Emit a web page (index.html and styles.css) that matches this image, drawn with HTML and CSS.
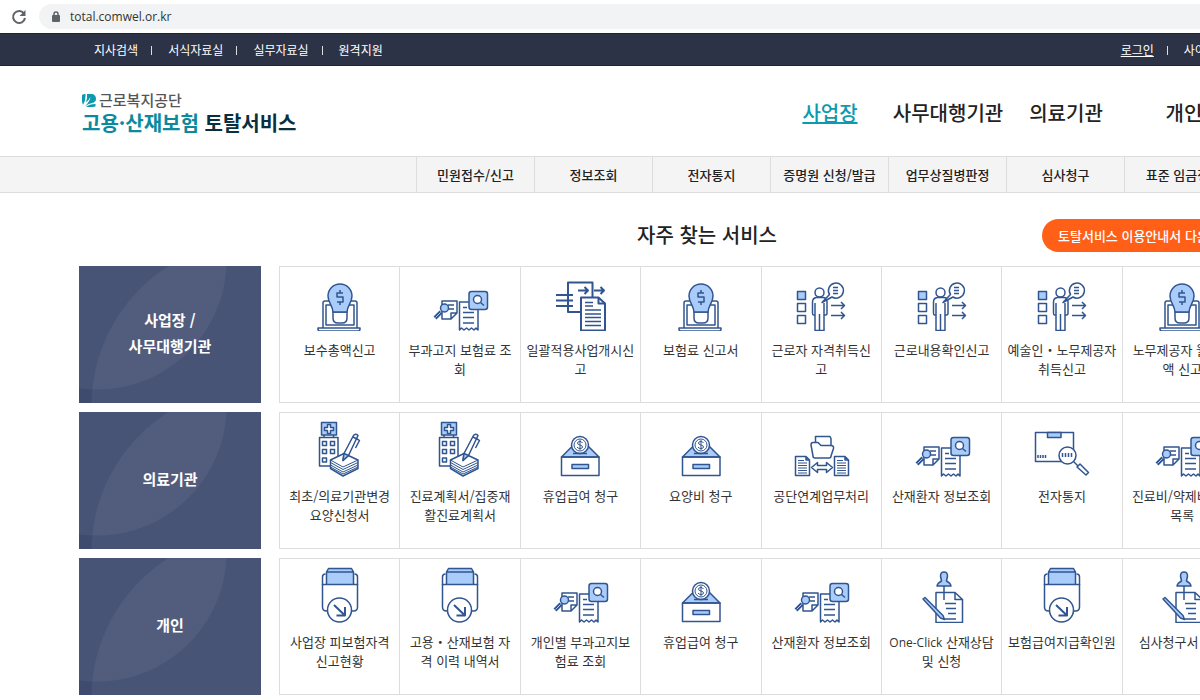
FILE: index.html
```
<!DOCTYPE html>
<html lang="ko">
<head>
    <meta charset="UTF-8">
    <meta name="viewport" content="width=device-width, initial-scale=1.0">
    <title>고용·산재보험 토탈서비스</title>
    <link rel="stylesheet" href="styles.css">
</head>
<body>
    <!-- service icons -->
    <svg class="sprite" aria-hidden="true">
        <symbol id="ico-bulb" viewBox="0 0 60 60">
            <path d="M13 57V32q0-2 2-2h30q2 0 2 2v25"/>
            <path d="M16 54V34h28v20z"/>
            <path d="M8 57h42v1q0 2-2 2H10q-2 0-2-2z"/>
            <path class="white" d="M23 41h14v6q0 5-5 5h-4q-5 0-5-5z"/>
            <path class="fill" d="M23 41c0-6-5-9-5-16a12 12 0 0 1 24 0c0 7-5 10-5 16z"/>
            <path d="M33 22h-6v4h6v5h-6M30 19v3M30 31v3"/>
        </symbol>
        <symbol id="ico-search" viewBox="0 0 60 60">
            <path d="M12 30h15v12l-6 6h-9zM27 42h-6v6M18 34h6M19 38h5"/>
            <path class="thick" d="M11 41l-6 6"/>
            <path class="core" d="M10.500 41.500l-5 5"/>
            <circle class="fill" cx="14.500" cy="37" r="4"/>
            <path class="white" d="M29.500 31H48v28l-2-2-2 2-2.500-2-2.500 2-2.500-2-2.500 2-2.500-2-2 2z"/>
            <path d="M33 36.500h4M33 41.500h11M33 46.500h11M33 52h11"/>
            <rect class="fill" x="39" y="20.500" width="18.500" height="18" rx="2.500"/>
            <circle class="white" cx="47.500" cy="28.500" r="4"/>
            <path d="M50.500 31.500l3.500 3"/>
        </symbol>
        <symbol id="ico-transfer" viewBox="0 0 60 60">
            <path class="bold" d="M18 11.500h24.500V41H18zM6 24h17M6 29.500h17M6 35h17"/>
            <path class="bold" d="M28 19.500h10M34.500 16l3.500 3.500-3.500 3.500M44 19.500h10M50.500 16l3.500 3.500-3.500 3.500"/>
            <path class="white bold" d="M31 26.500h17.500l6.500 6V59.500H31z"/>
            <path class="bold" d="M48.500 27v5.500H55"/>
            <path d="M35 31.500h8M35 35h8M35 39h16M35 43h16M35 46.500h16M35 50.500h16M35 54.500h16"/>
        </symbol>
        <symbol id="ico-person" viewBox="0 0 60 60">
            <path class="fill" d="M6.500 20.500h8v8h-8z"/>
            <path d="M6.500 32.500h8v8h-8zM6.500 44.500h8v8h-8z"/>
            <circle cx="28.500" cy="21.500" r="4.500"/>
            <path d="M24 59.500V44h-1.500q-1 0-1-2V31q0-4 4-4.500h7q3.500.500 3.500 4.500v11q0 2-1.500 2H33v15.500zM24 44V32M33 44V32M28.500 59V43"/>
            <path class="white" d="M38.500 23.500L31 31.500l10-5.500a7.500 7.500 0 1 0-2.500-2.500z"/>
            <path d="M42 16.500h5M42 19.500h5M42 22.500h5"/>
            <path d="M40 34.500h13.500M50 31l3.500 3.500L50 38M40 44.500h13.500M50 41l3.500 3.500L50 48"/>
        </symbol>
        <symbol id="ico-hospital" viewBox="0 0 60 60">
            <path d="M14 18v2M23.500 18v2M9.500 20.500H28V49H9.500z"/>
            <path class="fill" d="M11.500 5.500h15V18h-15z"/>
            <path class="white" d="M17.500 7.500h3v3h3v3h-3v3h-3v-3h-3v-3h3z"/>
            <path d="M12.500 24.500h4v4h-4zM20.500 24.500h4v4h-4zM12.500 32.500h4v4h-4zM20.500 32.500h4v4h-4zM12.500 41h4v4h-4z"/>
            <path class="white" d="M20.500 43L34 36.500 48 43v8.500l-15 7.500-12.500-7.500z"/>
            <path class="thin" d="M20.500 43L33 50 48 43M20.500 45.500L33 52.500 48 45.500M20.500 48L33 55 48 48M20.500 50L33 57 48 50"/>
            <path class="white" d="M33 43.500l1-7 9.500-18q2-2.500 4.500 0L38.500 38.500z"/>
            <path class="fill" d="M33 43.500l1-7 4.500 2z"/>
            <path d="M43 20l5 2.500 1.500 1-4 7.500"/>
        </symbol>
        <symbol id="ico-coin" viewBox="0 0 60 60">
            <path class="fill" d="M22 29.500h16.500L49 40H11.500z"/>
            <path d="M11.500 40H49v18.500H11.500z"/>
            <path class="fill" d="M22 47.500h16.500v4H22z"/>
            <circle class="white" cx="30" cy="28" r="8.500"/>
            <circle class="thin" cx="30" cy="28" r="6"/>
            <path class="thin" d="M32.500 26q-1-1.500-2.500-1.500-2.500 0-2.500 1.500t2.500 2 2.500 2-2.500 1.500q-2 0-3-1.500M30 23v10"/>
            <path d="M23 36.500h14"/>
        </symbol>
        <symbol id="ico-exchange" viewBox="0 0 60 60">
            <path d="M24.500 27v-7.500H39l1 2V28"/>
            <path class="white" d="M22 39l-2-11q0-2.500 2-2.500h5l3 3h10q3 0 2.500 3L40 39q0 2-2 2H24q-2 0-2-2z"/>
            <path d="M4.500 39.500H15l3.500 3.500v15.500h-14zM15 39.500V43h3.500M43.500 39.500H54l3.500 3.500v15.500h-14zM54 39.500V43h3.500"/>
            <path class="thin" d="M7 43.500h6M7 46h9M7 48.500h9M7 51h9M7 53.500h9M7 56h9M46 43.500h6M46 46h9M46 48.500h9M46 51h9M46 53.500h9M46 56h9"/>
            <path d="M20.500 50.500l6-5v3h9v-3l6 5-6 5v-3h-9v3z"/>
        </symbol>
        <symbol id="ico-package" viewBox="0 0 60 60">
            <path d="M3.500 15.500h38v29h-38z"/>
            <path class="fill" d="M15.500 15.500H29v5H15.500z"/>
            <path d="M6 38v3M8.500 38v3M11 38v3M13.500 38v3"/>
            <path d="M42 45l4 4"/>
            <path class="white" d="M45 50l3-3 8.500 8.500-2.500 2.500z"/>
            <circle class="white" cx="35.500" cy="38.500" r="8.500"/>
            <path d="M30.500 36v4M33.500 36v4M36.500 36v4M39.500 36v4"/>
        </symbol>
        <symbol id="ico-folder" viewBox="0 0 60 60">
            <path d="M12.500 22V14q0-3 3-3M47.500 22V14q0-3-3-3"/>
            <path class="fill" d="M16.500 21V9l2-3.500h23l2 3.500v12M16.500 9h27"/>
            <path class="white" d="M12.500 21.500h35V44q0 4-4 4h-27q-4 0-4-4z"/>
            <circle class="white" cx="29.500" cy="47" r="12"/>
            <path class="bold" d="M24 42l10.500 10M35 44v8.500h-8.500"/>
        </symbol>
        <symbol id="ico-pin" viewBox="0 0 60 60">
            <path d="M24 29.500h19l7.500 7v23H24zM43 29.500v7h7.500"/>
            <path d="M32 23v14M33 40.500h11M34 45.500h10M36 50.500h8M33 56h11"/>
            <path class="fill" d="M28.500 13q0-4 3.500-4t3.500 4l-1 5q4 2 4.500 5H25q.5-3 4.500-5z"/>
            <path class="fill" d="M11 36l2-1.500 18 18 1.500 4-4-1.500z"/>
        </symbol>
    </svg>

    <div class="browser-bar">
        <button class="reload" aria-label="새로고침">
            <svg width="16" height="16" viewBox="0 0 16 16"><path d="M13 4.500A6 6 0 1 0 14 9" fill="none" stroke="#5f6368" stroke-width="2"/><path d="M14.500 1v6h-6z" fill="#5f6368"/></svg>
        </button>
        <div class="address">
            <svg width="10" height="12" viewBox="0 0 10 12"><rect x="1" y="4" width="8" height="7" rx="1" fill="#5f6368"/><path d="M3 4.500V3a2 2 0 0 1 4 0v1.500" fill="none" stroke="#5f6368" stroke-width="1.500"/></svg>
            <input type="text" aria-label="주소" value="total.comwel.or.kr">
        </div>
    </div>

    <nav class="util">
        <div class="wrap util-inner">
            <ul>
                <li><a href="#">지사검색</a></li>
                <li><a href="#">서식자료실</a></li>
                <li><a href="#">실무자료실</a></li>
                <li><a href="#">원격지원</a></li>
            </ul>
            <ul class="util-right">
                <li><a href="#" class="login">로그인</a></li>
                <li><a href="#">사이트맵</a></li>
            </ul>
        </div>
    </nav>

    <header class="header">
        <div class="wrap header-inner">
            <a href="#" class="logo">
                <span class="logo-org">
                    <svg width="14" height="14" viewBox="0 0 14 14" fill="#0e9aae"><path d="M0 2q2-1.500 3.500-1Q4 7 1 12-.5 9 0 2z"/><path d="M5 1h5.500Q14 2 14 6q0 3-4 4-4 .5-7 3.500Q8 8 8.500 4 7 7 4 9.500 5.500 5 5 1z"/><path d="M4 14q3-3 9.500-3v2.500Q9 14.500 4 14z"/></svg>
                    근로복지공단
                </span>
                <span class="logo-name"><em>고용·산재보험</em> 토탈서비스</span>
            </a>
            <ul class="gnb">
                <li><a href="#" class="active">사업장</a></li>
                <li><a href="#">사무대행기관</a></li>
                <li><a href="#">의료기관</a></li>
                <li><a href="#">개인</a></li>
            </ul>
        </div>
    </header>

    <nav class="sub">
        <ul class="wrap">
            <li><a href="#">민원접수/신고</a></li>
            <li><a href="#">정보조회</a></li>
            <li><a href="#">전자통지</a></li>
            <li><a href="#">증명원 신청/발급</a></li>
            <li><a href="#">업무상질병판정</a></li>
            <li><a href="#">심사청구</a></li>
            <li><a href="#">표준 임금정보</a></li>
        </ul>
    </nav>

    <main>
        <div class="title-bar">
            <h2>자주 찾는 서비스</h2>
            <button class="guide">토탈서비스 이용안내서 다운로드</button>
        </div>

        <section class="wrap service">
            <h3>사업장 /<br>사무대행기관</h3>
            <ul>
                <li><a href="#"><svg><use href="#ico-bulb"/></svg>보수총액신고</a></li>
                <li><a href="#"><svg><use href="#ico-search"/></svg>부과고지 보험료 조회</a></li>
                <li><a href="#"><svg><use href="#ico-transfer"/></svg>일괄적용사업개시신고</a></li>
                <li><a href="#"><svg><use href="#ico-bulb"/></svg>보험료 신고서</a></li>
                <li><a href="#"><svg><use href="#ico-person"/></svg>근로자 자격취득신고</a></li>
                <li><a href="#"><svg><use href="#ico-person"/></svg>근로내용확인신고</a></li>
                <li><a href="#"><svg><use href="#ico-person"/></svg>예술인・노무제공자 취득신고</a></li>
                <li><a href="#"><svg><use href="#ico-bulb"/></svg>노무제공자 월보수액 신고</a></li>
            </ul>
        </section>

        <section class="wrap service">
            <h3>의료기관</h3>
            <ul>
                <li><a href="#"><svg><use href="#ico-hospital"/></svg>최초/의료기관변경 요양신청서</a></li>
                <li><a href="#"><svg><use href="#ico-hospital"/></svg>진료계획서/집중재활진료계획서</a></li>
                <li><a href="#"><svg><use href="#ico-coin"/></svg>휴업급여 청구</a></li>
                <li><a href="#"><svg><use href="#ico-coin"/></svg>요양비 청구</a></li>
                <li><a href="#"><svg><use href="#ico-exchange"/></svg>공단연계업무처리</a></li>
                <li><a href="#"><svg><use href="#ico-search"/></svg>산재환자 정보조회</a></li>
                <li><a href="#"><svg><use href="#ico-package"/></svg>전자통지</a></li>
                <li><a href="#"><svg><use href="#ico-search"/></svg>진료비/약제비청구 목록</a></li>
            </ul>
        </section>

        <section class="wrap service">
            <h3>개인</h3>
            <ul>
                <li><a href="#"><svg><use href="#ico-folder"/></svg>사업장 피보험자격 신고현황</a></li>
                <li><a href="#"><svg><use href="#ico-folder"/></svg>고용・산재보험 자격 이력 내역서</a></li>
                <li><a href="#"><svg><use href="#ico-search"/></svg>개인별 부과고지보험료 조회</a></li>
                <li><a href="#"><svg><use href="#ico-coin"/></svg>휴업급여 청구</a></li>
                <li><a href="#"><svg><use href="#ico-search"/></svg>산재환자 정보조회</a></li>
                <li><a href="#"><svg><use href="#ico-pin"/></svg><span class="latin">One-Click</span> 산재상담 및 신청</a></li>
                <li><a href="#"><svg><use href="#ico-folder"/></svg>보험급여지급확인원</a></li>
                <li><a href="#"><svg><use href="#ico-pin"/></svg>심사청구서 작성</a></li>
            </ul>
        </section>
    </main>
</body>
</html>
```
FILE: styles.css
```
* {
    box-sizing: border-box;
}
body {
    margin: 0;
    font-family: "Noto Sans CJK KR", sans-serif;
    font-size: 13px;
    color: #222;
    background: #fff;
    overflow-x: hidden;
}
ul {
    list-style: none;
    margin: 0;
    padding: 0;
}
a {
    color: inherit;
    text-decoration: none;
}
.sprite {
    position: absolute;
    width: 0;
    height: 0;
}
.wrap {
    margin-left: 79px;
    min-width: 1164px;
}

/* browser bar */
.browser-bar {
    display: flex;
    align-items: center;
    gap: 12px;
    height: 33px;
    padding-left: 11px;
}
.reload {
    display: flex;
    padding: 0;
    border: none;
    background: none;
}
.address {
    flex: 1;
    display: flex;
    align-items: center;
    gap: 9px;
    height: 25px;
    padding-left: 12px;
    background: #f1f3f4;
    border-radius: 13px 0 0 13px;
}
.address input {
    flex: 1;
    padding: 0;
    border: none;
    background: none;
    font-family: "Open Sans", sans-serif;
    font-size: 12px;
    color: #333;
}

/* top utility menu */
.util {
    background: #2d3347;
    border-top: 1px solid #1c2438;
    border-bottom: 1px solid #1c2438;
    color: #fff;
    font-size: 12px;
}
.util-inner {
    display: flex;
    height: 31px;
    align-items: center;
    padding: 0 15px;
}
.util ul {
    display: flex;
}
.util-right {
    margin-left: auto;
}
.util li + li::before {
    content: "";
    display: inline-block;
    width: 1px;
    height: 9px;
    margin: 0 16px 0 13px;
    background: #ddd;
}
.login {
    text-decoration: underline;
}

/* header */
.header-inner {
    display: flex;
    justify-content: space-between;
    align-items: center;
    height: 90px;
}
.logo {
    display: flex;
    flex-direction: column;
    padding-left: 3px;
    padding-top: 3px;
}
.logo-org {
    display: flex;
    align-items: center;
    gap: 3px;
    font-size: 15px;
    line-height: 20px;
    font-weight: 500;
    color: #555;
}
.logo-name {
    font-size: 20px;
    line-height: 25px;
    font-weight: 700;
    color: #0a2f3f;
}
.logo-name em {
    font-style: normal;
    color: #0b8a9d;
}
.gnb {
    display: grid;
    grid-template-columns: repeat(4, 118px);
    padding-top: 2px;
    text-align: center;
    font-size: 20px;
    font-weight: 500;
    white-space: nowrap;
}
.gnb .active {
    color: #0e9aae;
    text-decoration: underline;
}
.sub {
    background: #f4f4f4;
    border-top: 1px solid #ddd;
    border-bottom: 1px solid #ddd;
}
.sub ul {
    display: grid;
    grid-template-columns: repeat(7, 118px);
    justify-content: end;
    padding-right: 1px;
}
.sub li {
    border-left: 1px solid #ddd;
    line-height: 35px;
    text-align: center;
    font-weight: 500;
    white-space: nowrap;
}

/* title */
.title-bar {
    display: grid;
    grid-template-columns: 1fr auto 1fr;
    align-items: center;
    min-width: 1256px;
    height: 73px;
    margin-left: 79px;
    padding-top: 11px;
}
.title-bar h2 {
    grid-column: 2;
    margin: 0;
    font-size: 20px;
    line-height: 30px;
    font-weight: 500;
}
.guide {
    justify-self: end;
    min-width: 293px;
    height: 33px;
    padding: 0 16px;
    border: none;
    border-radius: 17px;
    background: #ff5f17;
    color: #fff;
    font-family: inherit;
    font-size: 13px;
    font-weight: 500;
    text-align: left;
}

/* service rows */
.service {
    display: grid;
    grid-template-columns: 182px 1fr;
    gap: 18px;
    min-height: 137px;
    margin-bottom: 9px;
}
.service:last-child {
    margin-bottom: 0;
}
.service h3 {
    display: flex;
    align-items: center;
    justify-content: center;
    margin: 0;
    padding-bottom: 3px;
    font-size: 15px;
    font-weight: 700;
    line-height: 26px;
    text-align: center;
    color: #fff;
    background:
        radial-gradient(circle at 18px -6px, rgba(255, 255, 255, 0.05) 129px, transparent 130px),
        radial-gradient(circle at 178px 140px, rgba(255, 255, 255, 0.05) 165px, transparent 166px),
        #3f4b6e;
}
.service ul {
    display: grid;
    grid-template-columns: repeat(8, 1fr);
    border: 1px solid #ddd;
    border-left: none;
}
.service li {
    border-left: 1px solid #ddd;
}
.service a {
    display: block;
    padding: 4px 5px 0;
    line-height: 19px;
    text-align: center;
    color: #333;
}
.latin {
    font-family: "Open Sans", sans-serif;
    font-size: 12px;
    line-height: 1;
}
.service svg {
    display: block;
    width: 60px;
    height: 60px;
    margin: 0 auto 9px;
    fill: none;
    stroke: #30558f;
    stroke-width: 1.5px;
    stroke-linejoin: round;
}
symbol .fill {
    fill: #a9ccfb;
}
symbol .white {
    fill: #fff;
}
symbol .thin {
    stroke-width: 1px;
}
symbol .bold {
    stroke-width: 2px;
}
symbol .thick {
    stroke-width: 4px;
}
symbol .core {
    stroke: #a9ccfb;
    stroke-width: 1px;
}
```
